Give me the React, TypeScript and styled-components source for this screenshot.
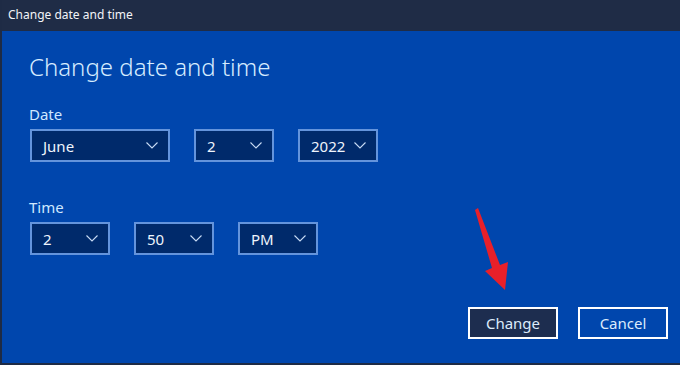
import React from 'react';
import styled, { createGlobalStyle } from 'styled-components';

const GlobalStyle = createGlobalStyle`
	html, body {
		margin: 0;
		padding: 0;
		background: #0046ad;
	}
	* {
		box-sizing: border-box;
	}
`;

const Window = styled.div`
	position: relative;
	width: 680px;
	height: 365px;
	display: flex;
	flex-direction: column;
	font-family: 'Segoe UI', 'Noto Sans', 'Open Sans', sans-serif;
	border-left: 2px solid #1e2b45;
	border-bottom: 2px solid #1e2b45;
	overflow: hidden;
`;

const TitleBar = styled.div`
	height: 31px;
	flex: none;
	background: #1f2c46;
	color: #f2f4f8;
	font-size: 12px;
	display: flex;
	align-items: center;
	padding-left: 6px;
	padding-bottom: 2px;
`;

const Body = styled.div`
	flex: 1;
	background: #0046ad;
	display: flex;
	flex-direction: column;
	padding: 20px 12px 24px 27px;
`;

const Heading = styled.h1`
	margin: 0;
	font-size: 24px;
	font-weight: 300;
	line-height: 32px;
	color: #d6ecff;
`;

const Label = styled.div<{ $top: number }>`
	margin-top: ${(p) => p.$top}px;
	font-size: 15px;
	line-height: 20px;
	color: #cfe8ff;
`;

const Row = styled.div`
	display: flex;
	gap: 24px;
	margin-top: 5px;
	padding-left: 1px;
`;

const SelectBox = styled.div<{ $width: number }>`
	width: ${(p) => p.$width}px;
	height: 33px;
	background: #002a6b;
	border: 2px solid #6494dc;
	display: flex;
	align-items: center;
	justify-content: space-between;
	padding: 0 10px 0 11px;
	color: #eef4fc;
	font-size: 15px;
`;

const Chevron = () => (
	<svg width="12" height="7" viewBox="0 0 12 7">
		<path d="M0.5 0.5 L6 6 L11.5 0.5" fill="none" stroke="#c8dcf5" strokeWidth="1.1" />
	</svg>
);

const Select = ({ value, width }: { value: string; width: number }) => (
	<SelectBox $width={width}>
		<span>{value}</span>
		<Chevron />
	</SelectBox>
);

const Actions = styled.div`
	margin-top: auto;
	display: flex;
	justify-content: flex-end;
	gap: 20px;
`;

const Button = styled.div<{ $primary?: boolean }>`
	width: 90px;
	height: 32px;
	border: 2px solid #ffffff;
	background: ${(p) => (p.$primary ? '#1d2d4f' : '#0046ad')};
	color: #dcebfb;
	font-size: 15px;
	display: flex;
	align-items: center;
	justify-content: center;
`;

const Arrow = styled.svg`
	position: absolute;
	left: -2px;
	top: 0;
	pointer-events: none;
`;

export default function App() {
	return (
		<>
			<GlobalStyle />
			<Window>
				<TitleBar>Change date and time</TitleBar>
				<Body>
					<Heading>Change date and time</Heading>
					<Label $top={21}>Date</Label>
					<Row>
						<Select value="June" width={140} />
						<Select value="2" width={80} />
						<Select value="2022" width={80} />
					</Row>
					<Label $top={35}>Time</Label>
					<Row>
						<Select value="2" width={80} />
						<Select value="50" width={80} />
						<Select value="PM" width={80} />
					</Row>
					<Actions>
						<Button $primary>Change</Button>
						<Button>Cancel</Button>
					</Actions>
				</Body>
				<Arrow width="680" height="365" viewBox="0 0 680 365">
					<polygon points="475,210 478,208 500,265 508,262 505,290 485,271 492,268" fill="#e8202a" />
				</Arrow>
			</Window>
		</>
	);
}
